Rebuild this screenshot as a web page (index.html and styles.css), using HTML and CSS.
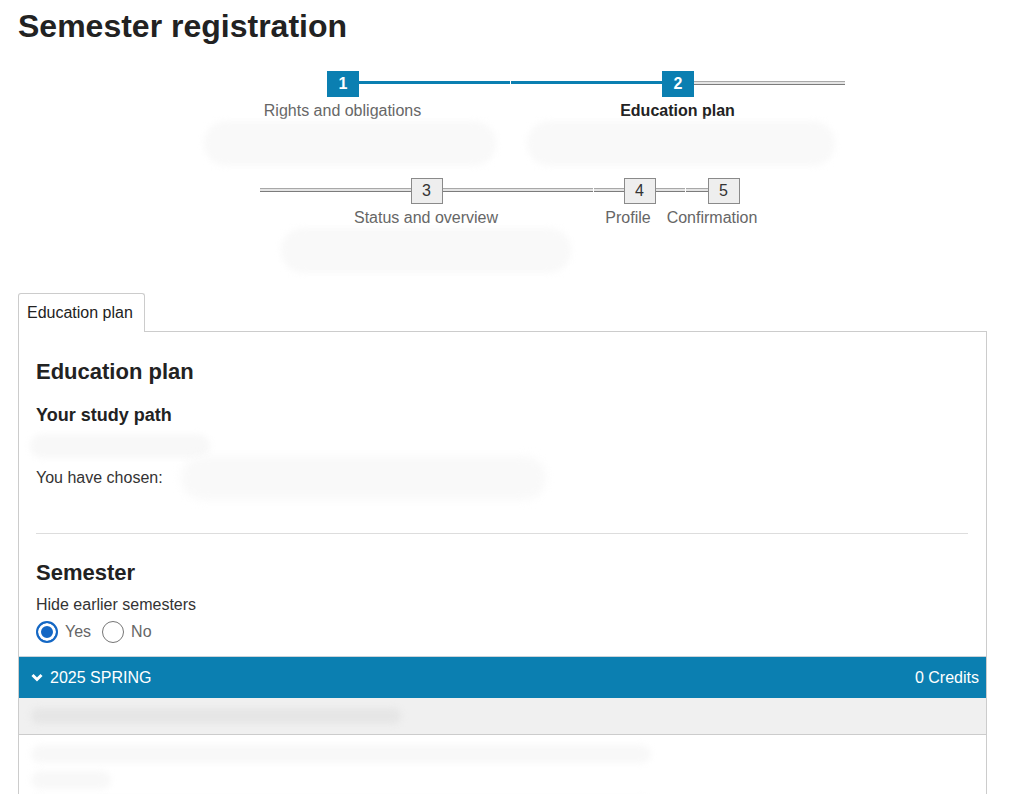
FILE: index.html
```html
<!DOCTYPE html>
<html lang="en">
<head>
    <meta charset="UTF-8">
    <meta name="viewport" content="width=device-width, initial-scale=1.0">
    <title>Semester registration</title>
    <link rel="stylesheet" href="styles.css">
</head>
<body>
    <h1 class="page-title">Semester registration</h1>

    <ol class="steps">
        <li class="step step-first step-done">
            <div class="step-track"><span class="step-num">1</span></div>
            <div class="step-label">Rights and obligations</div>
            <div class="step-desc desc-1"></div>
        </li>
        <li class="step step-current">
            <div class="step-track"><span class="step-num">2</span></div>
            <div class="step-label">Education plan</div>
            <div class="step-desc desc-2"></div>
        </li>
        <li class="step step-w3">
            <div class="step-track"><span class="step-num">3</span></div>
            <div class="step-label">Status and overview</div>
            <div class="step-desc desc-3"></div>
        </li>
        <li class="step step-w4 step-compact">
            <div class="step-track"><span class="step-num">4</span></div>
            <div class="step-label">Profile</div>
        </li>
        <li class="step step-w5 step-compact step-last">
            <div class="step-track"><span class="step-num">5</span></div>
            <div class="step-label">Confirmation</div>
        </li>
    </ol>

    <div class="tabs">
        <div class="tab">Education plan</div>
    </div>

    <div class="panel">
        <h2 class="panel-title">Education plan</h2>
        <h3 class="sub-title">Your study path</h3>
        <div class="blur-line blur-path"></div>
        <p class="chosen">You have chosen: <span class="blur-inline"></span></p>

        <hr class="divider">

        <h2 class="section-title">Semester</h2>
        <div class="field-label">Hide earlier semesters</div>
        <div class="radio-row">
            <input class="radio" type="radio" name="hide" id="hideYes" checked>
            <label class="radio-label" for="hideYes">Yes</label>
            <input class="radio" type="radio" name="hide" id="hideNo">
            <label class="radio-label" for="hideNo">No</label>
        </div>

        <div class="semester">
            <div class="semester-bar">
                <span class="semester-name">
                    <svg class="chevron" width="12" height="9" viewBox="0 0 12 9"><polyline points="1.5,2 6,6.5 10.5,2" fill="none" stroke="#fff" stroke-width="3"/></svg>
                    2025 SPRING
                </span>
                <span class="credits">0 Credits</span>
            </div>
            <div class="semester-head">
                <div class="blur-line blur-head"></div>
            </div>
            <div class="semester-body">
                <div class="blur-line blur-row1"></div>
                <div class="blur-line blur-row2"></div>
                <div class="blur-line blur-row1"></div>
            </div>
        </div>
    </div>
</body>
</html>
```

FILE: styles.css
```css
body {
    margin: 0;
    padding: 8px 24px 0 18px;
    font-family: "Liberation Sans", Arial, sans-serif;
    font-size: 16px;
    color: #333;
}
.page-title {
    margin: 0;
    font-size: 32px;
    line-height: 36px;
    color: #222;
}

/* stepper */
.steps {
    list-style: none;
    margin: 27px 0 0;
    padding: 0 0 0 15px;
    display: flex;
    flex-wrap: wrap;
    justify-content: center;
}
.step {
    width: 335px;
}
.step-w3 { width: 334px; }
.step-w4 { width: 92px; }
.step-w5 { width: 76px; }
.step-track {
    display: flex;
    height: 26px;
}
.step-track::before,
.step-track::after {
    content: "";
    flex: 1;
    margin-top: 10px;
    height: 2px;
    border-top: 1px solid #a8a8a8;
    border-bottom: 1px solid #7c7c7c;
    background: #e4e4e4;
}
.step-track::before {
    margin-left: 1px;
}
.step-first .step-track::before,
.step-last .step-track::after {
    visibility: hidden;
}
.step-done .step-track::before,
.step-done .step-track::after,
.step-current .step-track::before {
    height: 3px;
    border: 0;
    background: #0b7fb1;
}
.step-num {
    width: 32px;
    height: 26px;
    box-sizing: border-box;
    border: 1px solid #8a8a8a;
    background: #eee;
    display: flex;
    align-items: center;
    justify-content: center;
    color: #333;
}
.step-done .step-num,
.step-current .step-num {
    background: #0b7fb1;
    border-color: #0b7fb1;
    color: #fff;
    font-weight: bold;
}
.step-label {
    margin-top: 4px;
    line-height: 20px;
    display: flex;
    justify-content: center;
    white-space: nowrap;
    color: #666;
}
.step-compact .step-label {
    margin-left: -22px;
}
.step-current .step-label {
    color: #222;
    font-weight: bold;
}
.step-desc {
    height: 45px;
    margin-bottom: 12px;
    border-radius: 22px;
    background: #f9f9f9;
    filter: blur(3px);
}
.desc-1 { margin-left: 29px; margin-right: 14px; }
.desc-2 { margin-left: 17px; margin-right: 10px; }
.desc-3 { margin-left: 22px; margin-right: 22px; }

/* tab + panel */
.tabs {
    display: flex;
    margin-top: 8px;
}
.tab {
    position: relative;
    z-index: 1;
    margin-bottom: -1px;
    padding: 9px 11px 9px 8px;
    line-height: 20px;
    border: 1px solid #ccc;
    border-bottom: 0;
    border-radius: 3px 3px 0 0;
    background: #fff;
    color: #222;
}
.panel {
    border: 1px solid #ccc;
    padding: 26px 18px 0 17px;
}
.panel-title,
.section-title {
    margin: 0;
    font-size: 22px;
    line-height: 28px;
    color: #222;
}
.sub-title {
    margin: 18px 0 0;
    font-size: 18px;
    line-height: 22px;
    color: #222;
}
.blur-line {
    border-radius: 12px;
    background: #f8f8f8;
    filter: blur(3px);
}
.blur-path {
    width: 180px;
    height: 24px;
    margin: 8px 0 10px -6px;
}
.chosen {
    margin: 0;
    line-height: 20px;
    display: flex;
    align-items: center;
}
.blur-inline {
    display: inline-block;
    width: 365px;
    height: 44px;
    margin: -12px 0 -12px 18px;
    border-radius: 22px;
    background: #f9f9f9;
    filter: blur(4px);
}
.divider {
    margin: 45px 0 0;
    border: 0;
    border-top: 1px solid #ddd;
}
.section-title {
    margin-top: 25px;
}
.field-label {
    margin-top: 8px;
    line-height: 20px;
}
.radio-row {
    display: flex;
    align-items: center;
    height: 22px;
    margin-top: 6px;
}
.radio {
    appearance: none;
    width: 22px;
    height: 22px;
    margin: 0;
    border: 1px solid #767676;
    border-radius: 50%;
    background: #fff;
}
.radio:checked {
    border: 2px solid #1467c4;
    background: #1467c4;
    box-shadow: inset 0 0 0 3px #fff;
}
.radio-label {
    margin: 0 11px 0 7px;
    color: #666;
}

/* semester accordion */
.semester {
    margin: 13px -18px 0 -17px;
}
.semester-bar {
    display: flex;
    align-items: center;
    justify-content: space-between;
    height: 41px;
    padding: 0 7px 0 12px;
    border-top: 1px solid #c9d3da;
    background: #0b7fb1;
    color: #fff;
}
.semester-name {
    display: flex;
    align-items: center;
}
.chevron {
    margin-right: 7px;
}
.semester-head {
    height: 37px;
    padding: 10px 12px 0;
    box-sizing: border-box;
    border-bottom: 1px solid #ccc;
    background: #f0f0f0;
}
.blur-head {
    width: 370px;
    height: 16px;
    background: #e6e6e6;
}
.semester-body {
    padding: 10px 12px 40px;
}
.blur-row1 {
    width: 620px;
    height: 18px;
    margin-bottom: 8px;
}
.blur-row2 {
    width: 80px;
    height: 18px;
    margin-bottom: 8px;
}
```
